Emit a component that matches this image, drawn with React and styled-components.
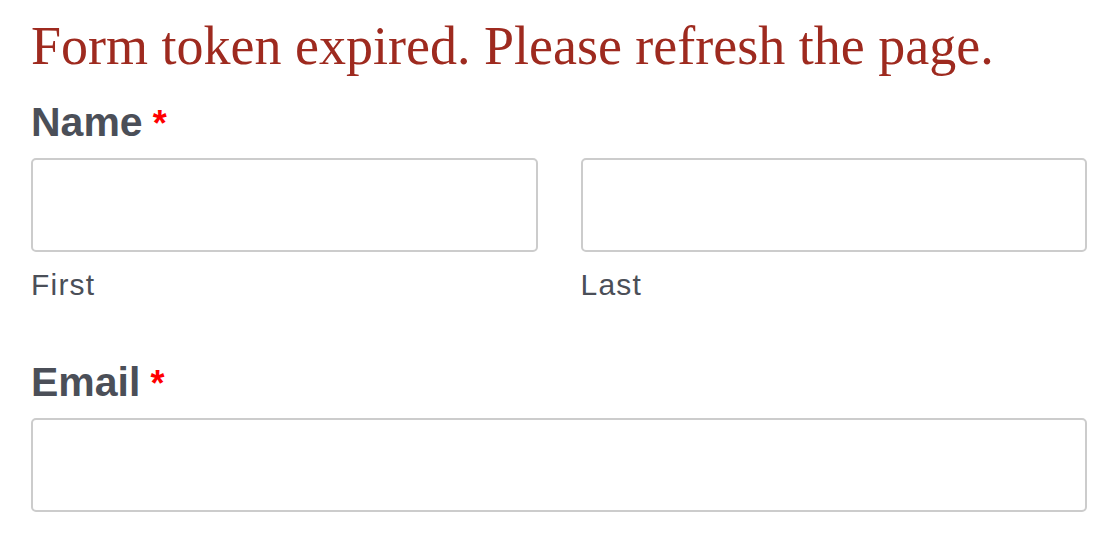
import React from "react";
import styled, { createGlobalStyle } from "styled-components";

const Global = createGlobalStyle`
  html, body { margin: 0; padding: 0; background: #fff; }
  body { font-family: "Liberation Sans", Arial, sans-serif; }
`;

const Page = styled.div`
  padding: 14px 29px 0 31px;
  display: flex;
  flex-direction: column;
`;

const ErrorTitle = styled.h1`
  margin: 0;
  font-family: "Liberation Serif", "Times New Roman", serif;
  font-weight: 400;
  font-size: 54px;
  line-height: 64px;
  color: #9e2a1f;
  white-space: nowrap;
`;

const Field = styled.div`
  display: flex;
  flex-direction: column;
  margin-top: ${(p) => p.$top}px;
`;

const Label = styled.div`
  font-weight: 700;
  font-size: 41px;
  line-height: 44px;
  color: #4b4f58;
`;

const Required = styled.span`
  color: #ff0000;
  margin-left: 10px;
  font-size: 36px;
`;

const Row = styled.div`
  display: grid;
  grid-template-columns: 1fr 1fr;
  column-gap: 43px;
  margin-top: 12px;
`;

const Col = styled.div`
  display: flex;
  flex-direction: column;
`;

const Input = styled.input`
  box-sizing: border-box;
  width: 100%;
  height: 94px;
  border: 2px solid #cccccc;
  border-radius: 5px;
  background: #fff;
  outline: none;
  margin: ${(p) => (p.$mt ? p.$mt : 0)}px 0 0 0;
`;

const SubLabel = styled.div`
  margin-top: 15px;
  font-size: 30px;
  line-height: 36px;
  letter-spacing: 1.2px;
  color: #4b4f58;
`;

export default function App() {
  return (
    <>
      <Global />
      <Page>
        <ErrorTitle>Form token expired. Please refresh the page.</ErrorTitle>
        <Field $top={22}>
          <Label>
            Name<Required>*</Required>
          </Label>
          <Row>
            <Col>
              <Input />
              <SubLabel>First</SubLabel>
            </Col>
            <Col>
              <Input />
              <SubLabel>Last</SubLabel>
            </Col>
          </Row>
        </Field>
        <Field $top={57}>
          <Label>
            Email<Required>*</Required>
          </Label>
          <Input $mt={12} />
        </Field>
      </Page>
    </>
  );
}
